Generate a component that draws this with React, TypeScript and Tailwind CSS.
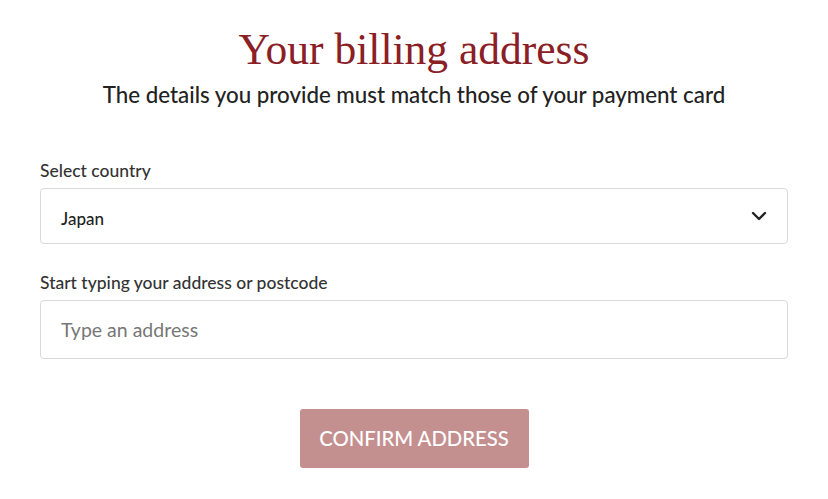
import React from "react";

function Chevron() {
  return (
    <svg width="16" height="10" viewBox="0 0 16 10" fill="none">
      <path d="M2 2l6 6 6-6" stroke="#222" strokeWidth="2.4" strokeLinecap="round" strokeLinejoin="round" />
    </svg>
  );
}

export default function App() {
  return (
    <div className="w-[828px] h-[499px] bg-white px-10 font-['Lato',sans-serif] text-[#2a2a2a]">
      <div className="pt-[24px] text-center">
        <h1 className="font-['Liberation_Serif',serif] text-[43.5px] leading-[50px] text-[#8a2026]">
          Your billing address
        </h1>
        <p className="mt-[8px] text-[22.3px] leading-[26px] font-medium text-[#222]">
          The details you provide must match those of your payment card
        </p>
      </div>

      <div className="mt-[53px]">
        <label className="block text-[17.5px] leading-[20px] font-medium text-[#333]">Select country</label>
        <div className="mt-[7px] flex h-[56px] items-center justify-between rounded-[4px] border border-[#d9d9d9] pl-5 pr-5">
          <span className="pt-[5px] text-[17px] font-medium text-[#222]">Japan</span>
          <Chevron />
        </div>
      </div>

      <div className="mt-[29px]">
        <label className="block text-[17.5px] leading-[20px] font-medium text-[#333]">
          Start typing your address or postcode
        </label>
        <div className="mt-[7px] flex h-[59px] items-center rounded-[4px] border border-[#d9d9d9] pl-5">
          <span className="text-[19.5px] text-[#777]">Type an address</span>
        </div>
      </div>

      <div className="mt-[50px] flex justify-center">
        <button className="h-[59px] w-[229px] rounded-[3px] bg-[#c48f8f] text-[20.3px] font-medium text-white">
          CONFIRM ADDRESS
        </button>
      </div>
    </div>
  );
}
